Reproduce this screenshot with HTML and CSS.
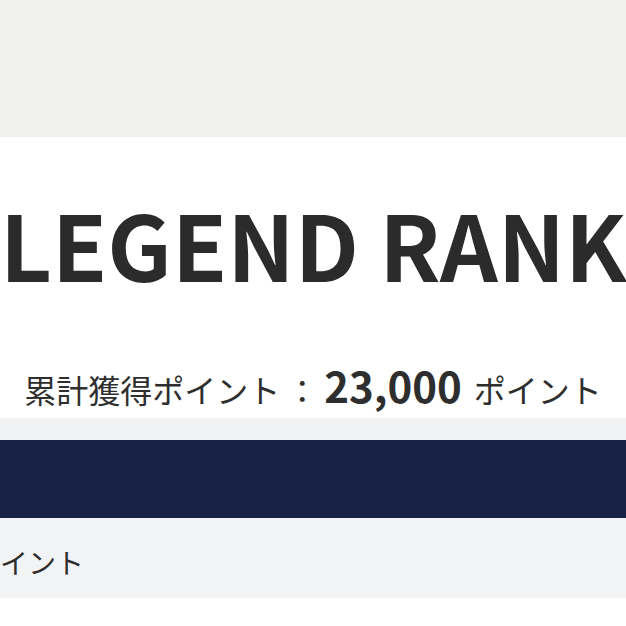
FILE: index.html
```html
<!DOCTYPE html>
<html lang="ja">
<head>
<meta charset="utf-8">
<title>LEGEND RANK</title>
<link rel="stylesheet" href="styles.css">
</head>
<body>
<div class="page">
  <div class="top-bar"></div>
  <section class="rank">
    <h1 class="rank-title">LEGEND RANK</h1>
    <p class="rank-points"><span class="label">累計獲得ポイント</span><span class="colon">：</span><span class="value">23,000</span><span class="unit">ポイント</span></p>
  </section>
  <div class="gap-band"></div>
  <div class="nav-band"></div>
  <div class="row-band"><span class="row-label">ポイント</span></div>
  <div class="bottom"></div>
</div>
</body>
</html>
```
FILE: styles.css
```css
html, body {
  margin: 0;
  padding: 0;
  background: #ffffff;
  overflow: hidden;
}
.page {
  width: 626px;
  font-family: "Noto Sans CJK JP", "Noto Sans", sans-serif;
  color: #2e2e2e;
}
.top-bar {
  height: 137px;
  background: #f0f0ee;
}
.rank {
  height: 281px;
  box-sizing: border-box;
  padding-top: 61px;
  background: #ffffff;
  text-align: center;
  overflow: hidden;
}
.rank-title {
  margin: 0;
  font-size: 90px;
  line-height: 1;
  font-weight: 700;
  letter-spacing: 0;
  white-space: nowrap;
  color: #2b2b2b;
}
.rank-points {
  margin: 76px 0 0;
  font-size: 42px;
  line-height: 1;
  white-space: nowrap;
}
.label,
.colon,
.unit {
  font-size: 32px;
}
.colon {
  margin-left: 6px;
}
.value {
  font-weight: 700;
  margin-left: 6px;
  margin-right: 12px;
}
.gap-band {
  height: 22px;
  background: #f1f2f4;
}
.nav-band {
  height: 78px;
  background: #172246;
}
.row-band {
  height: 80px;
  box-sizing: border-box;
  padding-top: 30px;
  background: #f2f3f5;
  overflow: hidden;
}
.row-label {
  display: block;
  margin-left: -28px;
  font-size: 28px;
  line-height: 1;
  white-space: nowrap;
}
.bottom {
  height: 28px;
  background: #ffffff;
}
```
